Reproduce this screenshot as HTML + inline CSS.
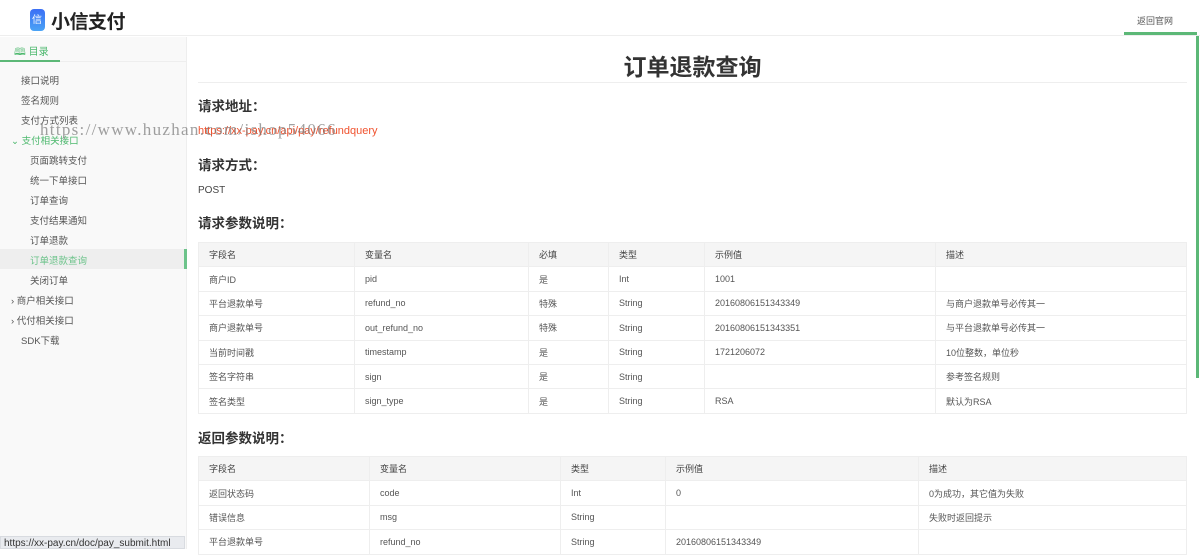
<!DOCTYPE html>
<html><head><meta charset="utf-8"><style>
*{margin:0;padding:0;box-sizing:border-box}
body{width:1200px;height:549px;overflow:hidden;background:#fff;font-family:"Liberation Sans","Noto Sans CJK SC",sans-serif;color:#333;position:relative}
.hdr{position:absolute;left:0;top:0;width:1200px;height:36px;border-bottom:1px solid #eee;background:#fff}
.logo{position:absolute;left:30px;top:9px;width:15px;height:22px;border-radius:4px;background:linear-gradient(#3b6ff5,#4aa3f5)}
.logo span{position:absolute;left:2px;top:2px;color:#fff;font-size:10px}
.brand{position:absolute;left:51px;top:7px;font-size:19px;font-weight:bold;color:#222;letter-spacing:-0.5px}
.back{position:absolute;left:1137px;top:14px;font-size:9px;color:#555}
.backline{position:absolute;left:1124px;top:32px;width:73px;height:3px;background:#5cb877}
.side{position:absolute;left:0;top:37px;width:187px;height:512px;background:#f9f9f9;border-right:1px solid #eee}
.tab{position:absolute;left:14px;top:6px;font-size:10px;color:#4cb86d}
.tabline{position:absolute;left:0;top:23px;width:60px;height:2px;background:#5cb877}
.tabb{position:absolute;left:0;top:24px;width:187px;height:1px;background:#eee}
.it{position:absolute;font-size:9.5px;color:#555}
.act{position:absolute;left:0;top:212px;width:187px;height:20px;background:#eee;border-right:3px solid #6cc38a}
.status{position:absolute;left:0;top:536px;width:185px;height:13px;background:#e9ebef;font-size:10px;color:#333;padding-left:3px;line-height:13px;border:1px solid #d8dbe0}
.sb{position:absolute;left:1196px;top:36px;width:3px;height:342px;background:#5cb877}
h1{position:absolute;left:198px;width:989px;top:48px;text-align:center;font-size:23px;font-weight:bold;color:#333}
.hr{position:absolute;left:198px;top:82px;width:989px;height:1px;background:#eee}
.h{position:absolute;left:198px;font-size:13.5px;font-weight:bold;color:#333}
.p{position:absolute;left:198px;font-size:10px;color:#444}
.wm{position:absolute;left:40px;top:120px;font-family:"Liberation Serif",serif;font-size:17px;color:rgba(120,120,120,.7);letter-spacing:1.3px}
table{position:absolute;left:198px;width:989px;border-collapse:collapse;font-size:9px;color:#555}
td{border:1px solid #eee;height:24.4px;padding-left:10px}
tr:first-child td{background:#f5f5f5;color:#444}
</style></head><body>
<div class="hdr"><div class="logo"><span>信</span></div><div class="brand">小信支付</div><div class="back">返回官网</div><div class="backline"></div></div>
<div class="side">
<div class="tab">🕮 目录</div><div class="tabb"></div><div class="tabline"></div>
<div class="act"></div>
<div class="it" style="left:21px;top:36px">接口说明</div>
<div class="it" style="left:21px;top:56px">签名规则</div>
<div class="it" style="left:21px;top:76px">支付方式列表</div>
<div class="it" style="left:11px;top:96px;color:#4cb86d">⌄ 支付相关接口</div>
<div class="it" style="left:30px;top:116px">页面跳转支付</div>
<div class="it" style="left:30px;top:136px">统一下单接口</div>
<div class="it" style="left:30px;top:156px">订单查询</div>
<div class="it" style="left:30px;top:176px">支付结果通知</div>
<div class="it" style="left:30px;top:196px">订单退款</div>
<div class="it" style="left:30px;top:216px;color:#6cc38a">订单退款查询</div>
<div class="it" style="left:30px;top:236px">关闭订单</div>
<div class="it" style="left:11px;top:256px">› 商户相关接口</div>
<div class="it" style="left:11px;top:276px">› 代付相关接口</div>
<div class="it" style="left:21px;top:296px">SDK下载</div>
</div>
<div class="sb"></div>
<h1>订单退款查询</h1><div class="hr"></div>
<div class="h" style="top:95px">请求地址：</div>
<div class="p" style="top:125px;color:#f0522e;font-size:11px">https://xx-pay.cn/api/pay/refundquery</div>
<div class="h" style="top:154px">请求方式：</div>
<div class="p" style="top:185px">POST</div>
<div class="h" style="top:212px">请求参数说明：</div>
<table style="top:242px">
<tr><td style="width:156px">字段名</td><td style="width:174px">变量名</td><td style="width:80px">必填</td><td style="width:96px">类型</td><td style="width:231px">示例值</td><td>描述</td></tr>
<tr><td>商户ID</td><td>pid</td><td>是</td><td>Int</td><td>1001</td><td></td></tr>
<tr><td>平台退款单号</td><td>refund_no</td><td>特殊</td><td>String</td><td>20160806151343349</td><td>与商户退款单号必传其一</td></tr>
<tr><td>商户退款单号</td><td>out_refund_no</td><td>特殊</td><td>String</td><td>20160806151343351</td><td>与平台退款单号必传其一</td></tr>
<tr><td>当前时间戳</td><td>timestamp</td><td>是</td><td>String</td><td>1721206072</td><td>10位整数，单位秒</td></tr>
<tr><td>签名字符串</td><td>sign</td><td>是</td><td>String</td><td></td><td>参考签名规则</td></tr>
<tr><td>签名类型</td><td>sign_type</td><td>是</td><td>String</td><td>RSA</td><td>默认为RSA</td></tr>
</table>
<div class="h" style="top:427px">返回参数说明：</div>
<table style="top:456px">
<tr><td style="width:171px">字段名</td><td style="width:191px">变量名</td><td style="width:105px">类型</td><td style="width:253px">示例值</td><td>描述</td></tr>
<tr><td>返回状态码</td><td>code</td><td>Int</td><td>0</td><td>0为成功，其它值为失败</td></tr>
<tr><td>错误信息</td><td>msg</td><td>String</td><td></td><td>失败时返回提示</td></tr>
<tr><td>平台退款单号</td><td>refund_no</td><td>String</td><td>20160806151343349</td><td></td></tr>
</table>
<div class="wm">https://www.huzhan.com/ishop54066</div>
<div class="status">https://xx-pay.cn/doc/pay_submit.html</div>
</body></html>
